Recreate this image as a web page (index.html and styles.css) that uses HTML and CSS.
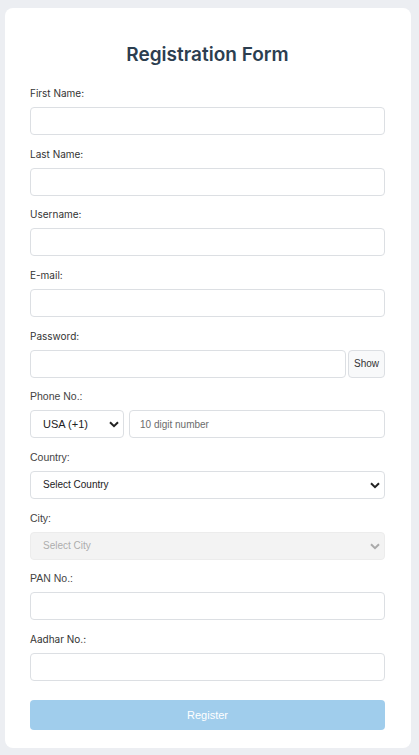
FILE: index.html
```html
<!DOCTYPE html>
<html lang="en">
<head>
<meta charset="utf-8">
<title>Registration Form</title>
<link rel="stylesheet" href="styles.css">
</head>
<body>
<div class="card">
  <h1 class="title">Registration Form</h1>
  <form class="form">
    <div class="field">
      <label class="label">First Name:</label>
      <input class="input" type="text">
    </div>
    <div class="field">
      <label class="label">Last Name:</label>
      <input class="input" type="text">
    </div>
    <div class="field">
      <label class="label">Username:</label>
      <input class="input" type="text">
    </div>
    <div class="field">
      <label class="label">E-mail:</label>
      <input class="input" type="text">
    </div>
    <div class="field">
      <label class="label">Password:</label>
      <div class="row">
        <input class="input grow" type="password">
        <button type="button" class="show-btn">Show</button>
      </div>
    </div>
    <div class="field">
      <label class="label arial">Phone No.:</label>
      <div class="row gap">
        <div class="select-wrap code">
          <select class="select"><option>USA (+1)</option></select>
          <svg class="chev" width="10" height="7" viewBox="0 0 10 7"><path d="M1 1.2 L5 5.2 L9 1.2" fill="none" stroke="#222" stroke-width="2"/></svg>
        </div>
        <input class="input grow" type="text" placeholder="10 digit number">
      </div>
    </div>
    <div class="field">
      <label class="label arial">Country:</label>
      <div class="select-wrap">
        <select class="select"><option>Select Country</option></select>
        <svg class="chev" width="10" height="7" viewBox="0 0 10 7"><path d="M1 1.2 L5 5.2 L9 1.2" fill="none" stroke="#222" stroke-width="2"/></svg>
      </div>
    </div>
    <div class="field">
      <label class="label arial">City:</label>
      <div class="select-wrap">
        <select class="select" disabled><option>Select City</option></select>
        <svg class="chev" width="10" height="7" viewBox="0 0 10 7"><path d="M1 1.2 L5 5.2 L9 1.2" fill="none" stroke="#aaa" stroke-width="2"/></svg>
      </div>
    </div>
    <div class="field">
      <label class="label arial">PAN No.:</label>
      <input class="input" type="text">
    </div>
    <div class="field">
      <label class="label">Aadhar No.:</label>
      <input class="input" type="text">
    </div>
    <button type="button" class="submit">Register</button>
  </form>
</div>
</body>
</html>
```
FILE: styles.css
```css
* { box-sizing: border-box; }
html, body { margin: 0; padding: 0; }
body {
  background: #eceef2;
  padding: 8px 8px 8px 5px;
  font-family: "Liberation Sans", Arial, sans-serif;
}
.card {
  background: #fff;
  border-radius: 8px;
  padding: 32px 26px 18px 25px;
}
.title {
  margin: 0 0 16px 0;
  text-align: center;
  font-family: Inter, "Open Sans", sans-serif;
  font-weight: 600;
  font-size: 19px;
  line-height: 30px;
  color: #2c3e50;
}
.form { display: flex; flex-direction: column; }
.field {
  display: flex;
  flex-direction: column;
  margin-bottom: 11.67px;
}
.label {
  font-family: Inter, "Open Sans", sans-serif;
  font-size: 10px;
  line-height: 14px;
  color: #333;
  margin-bottom: 7px;
}
.label.arial {
  font-family: "Liberation Sans", Arial, sans-serif;
  font-size: 10.5px;
  color: #444;
}
.input {
  height: 28px;
  width: 100%;
  border: 1px solid #dcdfe3;
  border-radius: 4px;
  background: #fff;
  padding: 0 10px;
  font-family: "Liberation Sans", Arial, sans-serif;
  font-size: 10px;
  color: #222;
  outline: none;
}
.input::placeholder { color: #6c6c6c; }
.row { display: flex; align-items: stretch; }
.row.gap { gap: 5px; }
.grow { flex: 1; width: auto; min-width: 0; }
.show-btn {
  height: 28px;
  margin-left: 2px;
  width: 37px;
  padding: 0;
  border: 1px solid #dcdfe3;
  border-radius: 4px;
  background: #f8f9fa;
  font-family: "Liberation Sans", Arial, sans-serif;
  font-size: 10px;
  color: #333;
}
.select-wrap { position: relative; width: 100%; }
.select-wrap.code { width: 94px; flex: none; }
.select {
  appearance: none;
  -webkit-appearance: none;
  width: 100%;
  height: 28px;
  border: 1px solid #dcdfe3;
  border-radius: 4px;
  background: #fff;
  padding: 0 12px;
  font-family: "Liberation Sans", Arial, sans-serif;
  font-size: 10px;
  color: #222;
  outline: none;
}
.code .select { font-size: 11px; }
.select:disabled { background: #efefef; color: #8a8a8a; border-color: #e4e4e4; }
.chev {
  position: absolute;
  right: 5px;
  top: 11px;
  pointer-events: none;
}
.submit {
  margin-top: 7px;
  height: 30px;
  border: none;
  border-radius: 4px;
  background: #a0cdec;
  color: #fff;
  font-family: "Liberation Sans", Arial, sans-serif;
  font-size: 11px;
}
```
